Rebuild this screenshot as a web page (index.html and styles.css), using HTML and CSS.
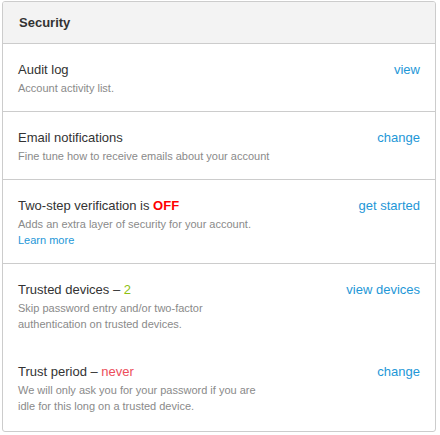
FILE: index.html
```html
<!DOCTYPE html>
<html>
<head>
<meta charset="utf-8">
<link rel="stylesheet" href="styles.css">
</head>
<body>
<div class="panel">
  <div class="panel-head">Security</div>
  <div class="section">
    <div class="item">
      <div class="info">
        <div class="title">Audit log</div>
        <div class="desc">Account activity list.</div>
      </div>
      <a class="action" href="#">view</a>
    </div>
  </div>
  <div class="section">
    <div class="item">
      <div class="info">
        <div class="title">Email notifications</div>
        <div class="desc">Fine tune how to receive emails about your account</div>
      </div>
      <a class="action" href="#">change</a>
    </div>
  </div>
  <div class="section">
    <div class="item">
      <div class="info">
        <div class="title">Two-step verification is <span class="off">OFF</span></div>
        <div class="desc">Adds an extra layer of security for your account.<br><a class="learn" href="#">Learn more</a></div>
      </div>
      <a class="action" href="#">get started</a>
    </div>
  </div>
  <div class="section last">
    <div class="item">
      <div class="info">
        <div class="title">Trusted devices – <span class="count">2</span></div>
        <div class="desc">Skip password entry and/or two-factor<br>authentication on trusted devices.</div>
      </div>
      <a class="action" href="#">view devices</a>
    </div>
    <div class="item">
      <div class="info">
        <div class="title">Trust period – <span class="never">never</span></div>
        <div class="desc">We will only ask you for your password if you are<br>idle for this long on a trusted device.</div>
      </div>
      <a class="action" href="#">change</a>
    </div>
  </div>
</div>
</body>
</html>
```

FILE: styles.css
```css
html, body {
  margin: 0;
  padding: 0;
  background: #ffffff;
}
body {
  font-family: "Liberation Sans", Arial, sans-serif;
  color: #333333;
}
.panel {
  margin: 1px 0 0 2px;
  width: 434px;
  box-sizing: border-box;
  border: 1px solid #cccccc;
  border-radius: 3px;
  overflow: hidden;
}
.panel-head {
  background: #f3f3f3;
  border-bottom: 1px solid #cccccc;
  padding: 12px 15px 11px 16px;
  font-size: 13px;
  line-height: 18px;
  font-weight: bold;
  color: #333333;
}
.section {
  padding: 17px 15px 15px 15px;
  border-bottom: 1px solid #cccccc;
  display: flex;
  flex-direction: column;
  gap: 31px;
}
.section.last {
  border-bottom: none;
  padding-bottom: 17px;
}
.item {
  display: flex;
  justify-content: space-between;
  align-items: flex-start;
}
.title {
  font-size: 13px;
  line-height: 18px;
  color: #333333;
}
.desc {
  margin-top: 1px;
  font-size: 11px;
  line-height: 16px;
  color: #8a8a8a;
}
.action {
  font-size: 13px;
  line-height: 18px;
  color: #1e97d7;
  text-decoration: none;
  white-space: nowrap;
}
.learn {
  color: #1e97d7;
  text-decoration: none;
}
.off {
  color: #ff0000;
  font-weight: bold;
}
.count {
  color: #8fbf12;
}
.never {
  color: #ec4d5b;
}
```
